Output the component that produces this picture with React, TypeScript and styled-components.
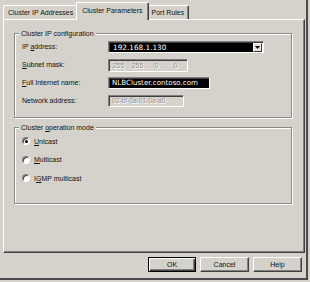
import React from "react"
import styled, { createGlobalStyle } from "styled-components"

const GlobalStyle = createGlobalStyle`
  html, body {
    margin: 0;
    padding: 0;
    background: #d5d2cc;
  }
  body {
    font-family: "Liberation Sans", Arial, sans-serif;
    font-size: 7px;
    color: #111;
  }
`

export default function App() {
  return (
    <>
      <GlobalStyle />
      <Window>
        <TabStrip>
          <Tab>Cluster IP Addresses</Tab>
          <Tab $active>Cluster Parameters</Tab>
          <Tab>Port Rules</Tab>
        </TabStrip>
        <Panel>
          <Group $padBottom={10}>
            <GroupTitle>Cluster IP configuration</GroupTitle>
            <FieldGrid>
              <Label>
                IP <u>a</u>ddress:
              </Label>
              <Combo>
                <ComboValue>192.168.1.130</ComboValue>
                <DropButton>
                  <svg width="5" height="3" viewBox="0 0 5 3">
                    <path d="M0 0h5L2.5 3z" fill="#000" />
                  </svg>
                </DropButton>
              </Combo>

              <Label>
                <u>S</u>ubnet mask:
              </Label>
              <IpField $width={80}>
                <Octet>255</Octet>
                <Dot>.</Dot>
                <Octet>255</Octet>
                <Dot>.</Dot>
                <Octet>0</Octet>
                <Dot>.</Dot>
                <Octet>0</Octet>
              </IpField>

              <Label>
                <u>F</u>ull Internet name:
              </Label>
              <TextField $width={102} $selected>
                NLBCluster.contoso.com
              </TextField>

              <Label>Network address:</Label>
              <TextField $width={76} $disabled>
                02-bf-0a-01-0a-a0
              </TextField>
            </FieldGrid>
          </Group>

          <Group $padBottom={19}>
            <GroupTitle>
              Cluster <u>o</u>peration mode
            </GroupTitle>
            <RadioList>
              <RadioRow>
                <RadioDot $checked />
                <span>
                  <u>U</u>nicast
                </span>
              </RadioRow>
              <RadioRow>
                <RadioDot />
                <span>
                  <u>M</u>ulticast
                </span>
              </RadioRow>
              <RadioRow>
                <RadioDot />
                <span>
                  I<u>G</u>MP multicast
                </span>
              </RadioRow>
            </RadioList>
          </Group>
        </Panel>
        <ButtonRow>
          <Button $default>OK</Button>
          <Button>Cancel</Button>
          <Button>Help</Button>
        </ButtonRow>
      </Window>
    </>
  )
}

const Window = styled.div`
  box-sizing: border-box;
  width: 308px;
  height: 280px;
  padding: 2px 0 0 3px;
  border-right: 2px solid #4a4a4a;
  border-bottom: 2px solid #4a4a4a;
`

const TabStrip = styled.div`
  display: flex;
  align-items: flex-end;
  height: 17px;
  position: relative;
  z-index: 1;
`

const Tab = styled.div<{ $active?: boolean }>`
  box-sizing: border-box;
  height: ${(p) => (p.$active ? 18 : 14)}px;
  margin: ${(p) => (p.$active ? "0 -2px -1px -2px" : "0")};
  padding: ${(p) => (p.$active ? "0 5px 2px" : "0 4px")};
  display: flex;
  align-items: center;
  background: #d5d2cc;
  border-top: 1px solid #fff;
  border-left: 1px solid #fff;
  border-right: 1px solid #404040;
  border-radius: 2px 2px 0 0;
  box-shadow: inset -1px 0 0 #808080;
  white-space: nowrap;
  position: relative;
  z-index: ${(p) => (p.$active ? 2 : 0)};
`

const Panel = styled.div`
  box-sizing: border-box;
  width: 302px;
  height: 234px;
  padding: 13px 0 0 10px;
  border-top: 1px solid #fff;
  border-left: 1px solid #fff;
  border-right: 1px solid #404040;
  border-bottom: 1px solid #404040;
  box-shadow: inset -1px -1px 0 #808080;
  display: flex;
  flex-direction: column;
  gap: 9px;
`

const Group = styled.div<{ $padBottom: number }>`
  position: relative;
  box-sizing: border-box;
  width: 278px;
  padding: 7px 0 ${(p) => p.$padBottom}px 7px;
  border: 1px solid #8a8a8a;
  box-shadow: inset 1px 1px 0 #fff, 1px 1px 0 #fff;
`

const GroupTitle = styled.span`
  position: absolute;
  top: -5px;
  left: 4px;
  padding: 0 2px;
  line-height: 9px;
  background: #d5d2cc;
`

const FieldGrid = styled.div`
  display: grid;
  grid-template-columns: 86px auto;
  grid-auto-rows: 12px;
  row-gap: 6px;
  align-items: center;
  justify-items: start;
`

const Label = styled.span`
  line-height: 12px;
`

const Sunken = styled.div`
  box-sizing: border-box;
  height: 12px;
  border-top: 1px solid #808080;
  border-left: 1px solid #808080;
  border-right: 1px solid #fff;
  border-bottom: 1px solid #fff;
  box-shadow: inset 1px 1px 0 #404040;
`

const Combo = styled(Sunken)`
  width: 156px;
  display: flex;
  padding: 1px 1px 0 1px;
  background: #fff;
`

const ComboValue = styled.div`
  flex: 1;
  background: #000;
  color: #fff;
  font-family: "DejaVu Sans", sans-serif;
  font-size: 7.3px;
  line-height: 9px;
  padding-left: 3px;
`

const DropButton = styled.div`
  box-sizing: border-box;
  width: 9px;
  height: 9px;
  display: flex;
  align-items: center;
  justify-content: center;
  background: #e4e2dc;
  border-top: 1px solid #fff;
  border-left: 1px solid #fff;
  border-right: 1px solid #404040;
  border-bottom: 1px solid #404040;
`

const IpField = styled(Sunken)<{ $width: number }>`
  width: ${(p) => p.$width}px;
  height: 13px;
  display: flex;
  align-items: center;
  padding-left: 2px;
  color: #989690;
  text-shadow: 1px 1px 0 #fff;
`

const Octet = styled.span`
  width: 15px;
  text-align: center;
`

const Dot = styled.span`
  width: 4px;
  text-align: center;
  color: #c4c1ba;
`

const TextField = styled(Sunken)<{
  $width: number
  $selected?: boolean
  $disabled?: boolean
}>`
  width: ${(p) => p.$width}px;
  padding-left: 3px;
  line-height: 10px;
  white-space: nowrap;
  background: ${(p) => (p.$selected ? "#000" : "#d5d2cc")};
  color: ${(p) => (p.$selected ? "#fff" : p.$disabled ? "#989690" : "#000")};
  font-family: ${(p) =>
    p.$selected ? '"DejaVu Sans", sans-serif' : '"Liberation Sans", sans-serif'};
  font-size: ${(p) => (p.$selected ? 7.1 : 6.6)}px;
  text-shadow: ${(p) => (p.$disabled ? "1px 1px 0 #fff" : "none")};
`

const RadioList = styled.div`
  display: flex;
  flex-direction: column;
  gap: 6.5px;
`

const RadioRow = styled.div`
  display: flex;
  align-items: center;
  gap: 4px;
  height: 12px;
`

const RadioDot = styled.span<{ $checked?: boolean }>`
  box-sizing: border-box;
  width: 8px;
  height: 8px;
  border-radius: 50%;
  background: #fff;
  border: 1px solid;
  border-color: #808080 #fff #fff #808080;
  box-shadow: inset 1px 1px 0 #404040;
  display: flex;
  align-items: center;
  justify-content: center;

  &::after {
    content: "";
    display: ${(p) => (p.$checked ? "block" : "none")};
    width: 3px;
    height: 3px;
    border-radius: 50%;
    background: #000;
  }
`

const ButtonRow = styled.div`
  display: flex;
  justify-content: flex-end;
  gap: 4px;
  margin-top: 4px;
  padding-right: 4px;
`

const Button = styled.div<{ $default?: boolean }>`
  box-sizing: border-box;
  width: ${(p) => (p.$default ? 48 : 49)}px;
  height: 15px;
  display: flex;
  align-items: center;
  justify-content: center;
  background: #d5d2cc;
  border: 1px solid;
  border-color: ${(p) =>
    p.$default ? "#000" : "#fff #404040 #404040 #fff"};
  box-shadow: ${(p) =>
    p.$default
      ? "inset 1px 1px 0 #fff, inset -1px -1px 0 #404040, inset -2px -2px 0 #808080"
      : "inset -1px -1px 0 #808080"};
`
